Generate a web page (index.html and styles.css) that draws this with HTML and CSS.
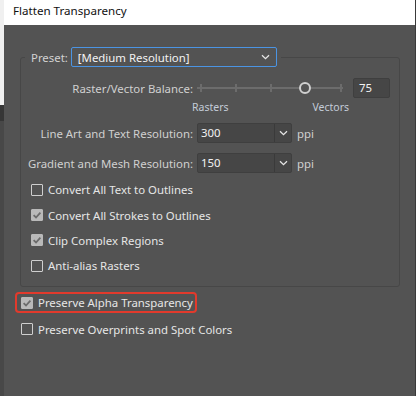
FILE: index.html
```html
<!DOCTYPE html>
<html lang="en">
<head>
    <meta charset="UTF-8">
    <title>Flatten Transparency</title>
    <link rel="stylesheet" href="styles.css">
</head>
<body>
    <div class="edge-left">
        <div class="edge-top"></div>
        <div class="edge-band"></div>
    </div>

    <div class="dialog">
        <div class="titlebar">Flatten Transparency</div>

        <div class="content">
            <fieldset class="panel">
                <legend class="preset">
                    <span class="preset-label">Preset:</span>
                    <span class="select focused">
                        <span class="select-text">[Medium Resolution]</span>
                        <svg class="chev" width="9" height="6" viewBox="0 0 9 6"><path d="M1 1.2 L4.5 4.6 L8 1.2" fill="none" stroke="#e6e6e6" stroke-width="1.3"/></svg>
                    </span>
                </legend>

                <!-- balance slider -->
                <div class="row slider-row">
                    <span class="label">Raster/Vector Balance:</span>
                    <span class="slider">
                        <span class="track"></span>
                        <span class="tick" style="left: 3px"></span>
                        <span class="tick" style="left: 38px"></span>
                        <span class="tick" style="left: 73px"></span>
                        <span class="tick" style="left: 143px"></span>
                        <span class="knob" style="left: 102px"></span>
                    </span>
                    <span class="num">75</span>
                </div>
                <div class="scale">
                    <span>Rasters</span>
                    <span>Vectors</span>
                </div>

                <div class="row res-row">
                    <span class="label">Line Art and Text Resolution:</span>
                    <span class="combo">
                        <span class="combo-text">300</span>
                        <span class="combo-btn">
                            <svg width="9" height="6" viewBox="0 0 9 6"><path d="M1 1.2 L4.5 4.6 L8 1.2" fill="none" stroke="#e6e6e6" stroke-width="1.3"/></svg>
                        </span>
                    </span>
                    <span class="unit">ppi</span>
                </div>
                <div class="row res-row second">
                    <span class="label">Gradient and Mesh Resolution:</span>
                    <span class="combo">
                        <span class="combo-text">150</span>
                        <span class="combo-btn">
                            <svg width="9" height="6" viewBox="0 0 9 6"><path d="M1 1.2 L4.5 4.6 L8 1.2" fill="none" stroke="#e6e6e6" stroke-width="1.3"/></svg>
                        </span>
                    </span>
                    <span class="unit">ppi</span>
                </div>

                <div class="checks">
                    <label class="check"><span class="box"></span>Convert All Text to Outlines</label>
                    <label class="check"><span class="box on"><svg width="12" height="12" viewBox="0 0 12 12"><path d="M2.6 6.2 L5 8.5 L9.4 3.6" fill="none" stroke="#6b6b6b" stroke-width="1.8"/></svg></span>Convert All Strokes to Outlines</label>
                    <label class="check"><span class="box on"><svg width="12" height="12" viewBox="0 0 12 12"><path d="M2.6 6.2 L5 8.5 L9.4 3.6" fill="none" stroke="#6b6b6b" stroke-width="1.8"/></svg></span>Clip Complex Regions</label>
                    <label class="check"><span class="box"></span>Anti-alias Rasters</label>
                </div>
            </fieldset>

            <div class="highlight">
                <label class="check"><span class="box on"><svg width="12" height="12" viewBox="0 0 12 12"><path d="M2.6 6.2 L5 8.5 L9.4 3.6" fill="none" stroke="#6b6b6b" stroke-width="1.8"/></svg></span>Preserve Alpha Transparency</label>
            </div>
            <label class="check outside"><span class="box"></span>Preserve Overprints and Spot Colors</label>
        </div>
    </div>

    <div class="edge-right"></div>
</body>
</html>
```

FILE: styles.css
```css
body {
    margin: 0;
    width: 416px;
    height: 396px;
    overflow: hidden;
    display: flex;
    background: #535353;
    font-family: 'Noto Sans', 'Open Sans', sans-serif;
    font-size: 11.4px;
    white-space: nowrap;
}

.edge-left {
    width: 4px;
    background: #484848;
}

.edge-top {
    height: 105px;
    background: #f0f0f0;
}

.edge-band {
    height: 16px;
    background: #363636;
}

.edge-right {
    width: 1px;
    background: #3a3a3a;
}

.dialog {
    flex: 1;
    display: flex;
    flex-direction: column;
    background: #535353;
}

.titlebar {
    height: 25px;
    line-height: 22px;
    background: #fff;
    color: #111;
    padding-left: 9px;
    font-size: 11.6px;
}

.content {
    padding: 22px 15px 0 16px;
}

.panel {
    margin: 0;
    padding: 0 0 10px 0;
    border: 1px solid #474747;
    border-radius: 3px;
    height: 240px;
    box-sizing: border-box;
}

.preset {
    display: flex;
    align-items: center;
    padding: 0 4px 0 6px;
    margin-left: 4px;
}

.preset-label {
    color: #d2d2d2;
    margin-right: 3px;
}

.select {
    width: 206px;
    height: 20px;
    box-sizing: border-box;
    border: 1px solid #4b94e3;
    border-radius: 2px;
    background: #535353;
    display: flex;
    align-items: center;
    justify-content: space-between;
    padding: 0 6px 0 6px;
}

.select-text {
    color: #f2f2f2;
}

.row {
    display: flex;
    align-items: center;
    height: 20px;
}

.label {
    width: 172px;
    text-align: right;
    color: #d0d0d0;
    flex-shrink: 0;
}

.slider-row {
    margin-top: 11px;
}

.slider {
    position: relative;
    width: 146px;
    height: 20px;
    margin-left: 4px;
}

.track {
    position: absolute;
    left: 0;
    right: 0;
    top: 9px;
    height: 2px;
    background: #6c6c6c;
}

.tick {
    position: absolute;
    top: 6px;
    width: 2px;
    height: 8px;
    background: #6c6c6c;
}

.knob {
    position: absolute;
    top: 4px;
    width: 8px;
    height: 8px;
    border: 2px solid #d0d0d0;
    border-radius: 50%;
    background: #535353;
}

.num {
    margin-left: 10px;
    width: 37px;
    height: 20px;
    box-sizing: border-box;
    background: #464646;
    border: 1px solid #3f3f3f;
    border-radius: 2px;
    color: #f2f2f2;
    padding-left: 5px;
    line-height: 18px;
}

.scale {
    display: flex;
    height: 14px;
    margin-top: 2px;
    font-size: 10.5px;
    color: #c4ccd8;
    line-height: 14px;
}

.scale span:first-child {
    margin-left: 171px;
}

.scale span:last-child {
    margin-left: 84px;
}

.res-row {
    margin-top: 9px;
}

.res-row.second {
    margin-top: 10px;
}

.combo {
    margin-left: 4px;
    width: 95px;
    height: 20px;
    box-sizing: border-box;
    display: flex;
    background: #464646;
    border: 1px solid #3f3f3f;
    border-radius: 2px;
}

.combo-text {
    flex: 1;
    color: #f2f2f2;
    padding-left: 3px;
    line-height: 18px;
}

.combo-btn {
    width: 16px;
    border-left: 1px solid #3a3a3a;
    display: flex;
    align-items: center;
    justify-content: center;
}

.unit {
    margin-left: 5px;
    color: #d0d0d0;
}

.checks {
    margin-top: 4px;
    display: flex;
    flex-direction: column;
}

.check {
    display: flex;
    align-items: center;
    height: 25.4px;
    color: #e6e6e6;
}

.checks .check {
    padding-left: 10px;
}

.box {
    width: 12px;
    height: 12px;
    box-sizing: border-box;
    border: 1px solid #cfcfcf;
    border-radius: 1px;
    margin-right: 5px;
    display: flex;
    flex-shrink: 0;
}

.box.on {
    background: #b9b9b9;
    border-color: #b9b9b9;
}

.box svg {
    margin: -1px;
}

.highlight {
    margin: 5px 0 0 -5px;
    width: 182px;
    height: 21px;
    box-sizing: border-box;
    border: 2px solid #e23a2c;
    border-radius: 4px;
    display: flex;
    align-items: center;
    padding-left: 4px;
}

.highlight .check {
    height: 17px;
}

.outside {
    margin: 6px 0 0 1px;
    height: 20px;
}
```
